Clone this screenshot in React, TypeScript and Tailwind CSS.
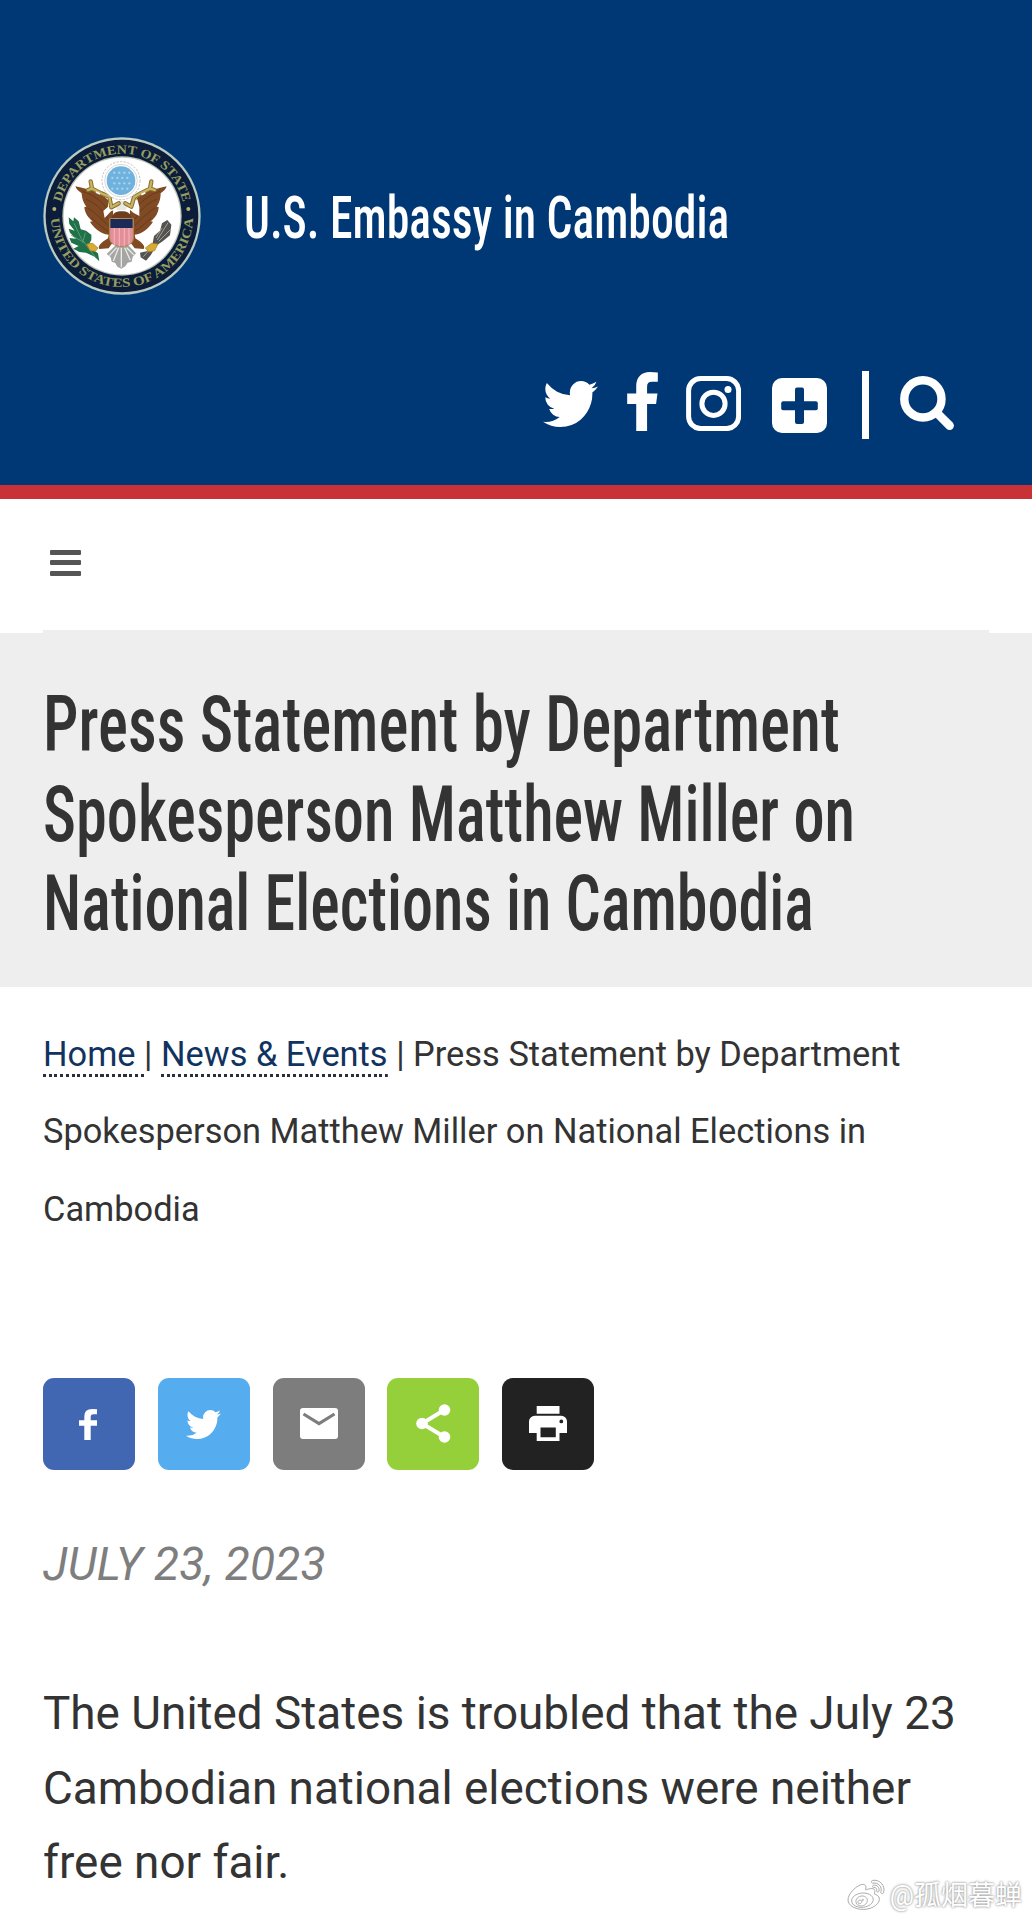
import type { ReactNode } from 'react';
import { FaWeibo } from 'react-icons/fa';

const TWITTER =
  'M1684 408q-67 98-162 167 1 14 1 42 0 130-38 259.5t-115.5 248.5-184.5 210.5-258 146-323 54.5q-271 0-496-145 35 4 78 4 225 0 401-138-105-2-188-64.5t-114-159.5q33 5 61 5 43 0 85-11-112-23-185.5-111.5t-73.5-205.5v-4q68 38 146 41-66-44-105-115t-39-154q0-88 44-163 121 149 294.5 238.5t371.5 99.5q-8-38-8-74 0-134 94.5-228.5t228.5-94.5q140 0 236 102 109-21 205-78-37 115-142 178 93-10 186-50z';

const FACEBOOK =
  'M1343 12v264h-157q-86 0-116 36t-30 108v189h293l-39 296h-254v759h-306v-759h-255v-296h255v-218q0-186 104-288.5t277-102.5q147 0 228 12z';

function TwitterIcon({ className }: { className: string }) {
  return (
    <svg viewBox="108 256 1576 1280" preserveAspectRatio="none" fill="currentColor" className={className}>
      <path d={TWITTER} />
    </svg>
  );
}

function Seal() {
  return (
    <svg viewBox="38 50 480 480" className="h-40 w-40 shrink-0">
      <defs>
        <path id="arc-top" d="M 91 290 A 187 187 0 0 1 465 290" />
        <path id="arc-bottom" d="M 65 290 A 213 213 0 0 0 491 290" />
      </defs>
      <circle cx="278" cy="290" r="236" fill="#b9cbc0" />
      <circle cx="278" cy="290" r="229" fill="#0b1d3a" />
      <circle cx="278" cy="290" r="179" fill="#b9c2b4" />
      <circle cx="278" cy="290" r="175" fill="#fff" />
      <g fill="#979e62" fontSize="38" className="font-['Liberation_Serif',serif] font-bold">
        <text textAnchor="middle">
          <textPath href="#arc-top" startOffset="50%" textLength="505" lengthAdjust="spacingAndGlyphs">
            DEPARTMENT OF STATE
          </textPath>
        </text>
        <text textAnchor="middle">
          <textPath href="#arc-bottom" startOffset="50%" textLength="655" lengthAdjust="spacingAndGlyphs">
            UNITED STATES OF AMERICA
          </textPath>
        </text>
      </g>
      <circle cx="75" cy="269" r="6" fill="#b4b36c" />
      <circle cx="477" cy="269" r="6" fill="#b4b36c" />

      {/* tail */}
      <path d="M262 375 L232 404 L244 414 L247 427 L258 431 L264 442 L276 448 L288 441 L295 430 L307 427 L310 413 L320 402 L294 375Z" fill="#a5a5a3" />
      <path d="M268 385 L252 425 M276 385 V444 M286 385 L303 423 M262 385 L240 409 M292 385 L314 407" stroke="#e9e9e7" strokeWidth="4" fill="none" />

      {/* wings and body */}
      <path d="M138 201 C160 206 186 211 204 219 C228 232 246 248 251 268 L253 365 L238 387 L210 389 C203 381 218 368 236 357 L238 346 C214 344 190 322 182 307 L190 306 C176 295 166 280 165 263 L171 262 C160 248 158 234 157 222 C147 215 141 209 138 201Z" fill="#7f4a24" />
      <path d="M412 201 C392 206 366 211 348 219 C326 232 308 248 302 268 L300 365 L316 387 L343 389 C350 381 336 368 318 357 L316 346 C340 344 362 322 371 307 L364 306 C378 295 388 280 388 263 L382 262 C392 248 394 234 394 222 C404 215 409 209 412 201Z" fill="#7f4a24" />
      <path d="M160 216 C190 225 220 245 238 276 M170 240 C196 250 220 270 236 300 M175 266 C196 278 216 300 236 318 M186 296 C204 310 220 326 236 336 M392 216 C362 225 334 245 315 276 M382 240 C356 250 334 270 317 300 M377 266 C356 278 336 300 317 318 M366 296 C348 310 334 326 317 336" stroke="#6a3b1a" strokeWidth="3" fill="none" />
      <path d="M248 296 C250 280 262 276 277 276 C293 276 304 280 307 298Z" fill="#6e3d1c" />
      <path d="M236 240 L262 246 L250 258 L262 268 L245 276 L226 296 L222 275 L236 262Z M324 240 L296 246 L308 258 L298 268 L312 280 L330 290 L330 262Z" fill="#fff" />
      <path d="M256 250 C268 242 288 242 296 252 L290 272 L262 272Z" fill="#e8e8e2" />

      {/* scrolls */}
      <g fill="none" strokeLinecap="round" strokeLinejoin="round">
        <path d="M184 186 L188 208 L176 212 M188 208 L216 222 L240 232 L246 264 L268 252 M366 186 L362 208 L376 212 M362 208 L334 222 L314 234 L306 262 L288 252" stroke="#85702b" strokeWidth="13" />
        <path d="M184 186 L188 208 L176 212 M188 208 L216 222 L240 232 L246 264 L268 252 M366 186 L362 208 L376 212 M362 208 L334 222 L314 234 L306 262 L288 252" stroke="#c9b262" strokeWidth="7" />
      </g>
      <path d="M200 218 L212 224 M348 220 L336 226" stroke="#fff" strokeWidth="5" />

      {/* glory */}
      <circle cx="275" cy="184" r="57" fill="#fff" stroke="#c3c3c3" strokeWidth="3" strokeDasharray="7 4" />
      <circle cx="275" cy="184" r="49" fill="none" stroke="#d9d9d9" strokeWidth="3" />
      <circle cx="275" cy="184" r="43" fill="#6fb2dd" />
      <g fill="#a9d3ec">
        {[160, 176, 192, 208].map((y, row) =>
          [252, 267, 282, 297].map((x) => <circle key={`${x}-${y}`} cx={x + (row % 2 ? -3 : 3)} cy={y} r="3.5" />),
        )}
      </g>

      {/* shield */}
      <path d="M241 298 H312 V356 C312 374 296 379 277 382 C258 379 241 374 241 356Z" fill="#e58d98" stroke="#a98a4b" strokeWidth="3" />
      <path d="M255 326 V377 M270 326 V381 M285 326 V381 M299 326 V376" stroke="#edb0b4" strokeWidth="4" />
      <path d="M243 299 H310 V326 H243Z" fill="#1b2a57" />

      {/* olive branch */}
      <path d="M118 294 L132 306 L134 294 L148 306 L154 330 L170 334 L186 346 L186 362 L178 376 L186 388 L206 402 L210 426 L196 412 L170 400 L150 398 L132 388 L148 380 L126 370 L120 356 L140 358 L122 340 L118 328 L136 334 L120 314Z" fill="#1f7148" />
      <path d="M134 312 L156 358 L200 416 M126 348 L166 370 M168 340 L160 370" stroke="#5d9879" strokeWidth="3" fill="none" />

      {/* arrows */}
      <path d="M414 302 L426 316 L422 348 L400 366 L382 378 L364 408 L350 424 L334 414 L332 400 L352 396 L370 372 L374 350 L392 334 L398 312Z" fill="#55534f" />
      <path d="M416 310 L384 362 M424 330 L388 366 M398 326 L380 356 M360 392 L342 412" stroke="#a4a29c" strokeWidth="3" />
      <path d="M172 374 L190 372 L206 386 L198 396 L182 394Z M386 374 L366 372 L348 386 L358 398 L376 394Z" fill="#d9ab35" stroke="#a37e20" strokeWidth="2" />
    </svg>
  );
}

function ShareButton({ color, children }: { color: string; children: ReactNode }) {
  return (
    <button className={`flex h-[92px] w-[92px] items-center justify-center rounded-[11px] text-white ${color}`}>
      {children}
    </button>
  );
}

function CrumbLink({ children }: { children: ReactNode }) {
  return (
    <a className="whitespace-pre bg-[repeating-linear-gradient(90deg,#26303f_0_3px,transparent_3px_5.75px)] bg-[length:100%_3px] bg-bottom bg-no-repeat pb-[3px] text-[#10335f]">
      {children}
    </a>
  );
}

export default function App() {
  return (
    <div className="relative h-[1920px] w-[1032px] overflow-hidden bg-white font-['Roboto',sans-serif] text-[#333]">
      <header className="h-[499px] border-b-[14px] border-[#c83236] bg-[#003875] text-white">
        <div className="flex items-center pt-[136px] pl-[42px]">
          <Seal />
          <span className="mt-[4px] ml-[42px] block origin-left scale-x-[0.774] text-[59px] leading-[70px] font-medium whitespace-nowrap [font-stretch:75%]">
            U.S. Embassy in Cambodia
          </span>
        </div>

        <div className="mt-[75px] flex items-start pl-[543px]">
          <TwitterIcon className="mt-[10px] h-[46px] w-[55px]" />
          <svg viewBox="479 0 864 1664" fill="currentColor" className="mt-px ml-[29px] h-[59px] w-[31px]">
            <path d={FACEBOOK} />
          </svg>
          <svg viewBox="0 0 55 55" className="mt-[5px] ml-[28px] h-[55px] w-[55px]">
            <rect x="2.6" y="2.6" width="50" height="50" rx="12" fill="none" stroke="currentColor" strokeWidth="5" />
            <circle cx="27.5" cy="27.8" r="11.6" fill="none" stroke="currentColor" strokeWidth="5" />
            <circle cx="42" cy="13.4" r="3.5" fill="currentColor" />
          </svg>
          <svg viewBox="0 0 55 55" className="mt-[7px] ml-[31px] h-[55px] w-[55px]">
            <rect width="55" height="55" rx="10" fill="currentColor" />
            <rect x="23" y="9.5" width="9" height="36.5" rx="2" fill="#003875" />
            <rect x="9.2" y="23.2" width="36.6" height="9" rx="2" fill="#003875" />
          </svg>
          <div className="ml-[35px] h-[68px] w-[6.5px] bg-white" />
          <svg viewBox="0 0 55 55" className="mt-[5px] ml-[31px] h-[55px] w-[55px]" fill="none" stroke="currentColor">
            <circle cx="22.9" cy="22.9" r="18.6" strokeWidth="8.4" />
            <path d="M37 37L49.6 49.6" strokeWidth="8.6" strokeLinecap="round" />
          </svg>
        </div>
      </header>

      <nav className="flex h-[134px] flex-col justify-between px-[43px]">
        <button className="mt-[50.5px] ml-[7px] flex w-[31px] flex-col gap-[5.5px]">
          <span className="h-[5px] rounded-[1px] bg-[#555]" />
          <span className="h-[5px] rounded-[1px] bg-[#555]" />
          <span className="h-[5px] rounded-[1px] bg-[#555]" />
        </button>
        <div className="h-[3px] bg-[#eee]" />
      </nav>

      <section className="h-[354px] bg-[#eee] pt-[47px] pl-[43px]">
        <h1 className="text-[78px] leading-[89.5px] font-medium whitespace-nowrap [font-stretch:75%]">
          <span className="block origin-left scale-x-[0.809]">Press Statement by Department</span>
          <span className="block origin-left scale-x-[0.799]">Spokesperson Matthew Miller on</span>
          <span className="block origin-left scale-x-[0.796]">National Elections in Cambodia</span>
        </h1>
      </section>

      <main className="px-[43px] pt-[29px]">
        <p className="text-[34.4px] leading-[77.4px] whitespace-nowrap">
          <CrumbLink>{'Home '}</CrumbLink>| <CrumbLink>{'News & Events'}</CrumbLink> | Press Statement by Department
          <br />
          Spokesperson Matthew Miller on National Elections in
          <br />
          Cambodia
        </p>

        <div className="mt-[130px] flex gap-[22.75px]">
          <ShareButton color="bg-[#4167b2]">
            <svg viewBox="479 0 864 1664" preserveAspectRatio="none" fill="currentColor" className="mr-[2px] h-[31px] w-[18px]">
              <path d="M1343 12v274h-157q-146 0-146 134v189h303v286h-303v769h-306v-769h-255v-286h255v-218q0-391 381-391q147 0 228 12z" />
            </svg>
          </ShareButton>
          <ShareButton color="bg-[#55acee]">
            <TwitterIcon className="mr-[1px] h-[29px] w-[35px]" />
          </ShareButton>
          <ShareButton color="bg-[#7d7d7d]">
            <svg viewBox="0 0 38 31" className="mb-px h-[31px] w-[38px]">
              <rect width="38" height="31" rx="3" fill="currentColor" />
              <path d="M3.5 6L19 15.6L34.5 6" fill="none" stroke="#7d7d7d" strokeWidth="3.2" />
            </svg>
          </ShareButton>
          <ShareButton color="bg-[#95d03a]">
            <svg viewBox="0 0 35 39" className="mb-px h-[39px] w-[35px]">
              <path d="M28.5 6L6 19.5L28.5 33" fill="none" stroke="currentColor" strokeWidth="4" />
              <circle cx="28.5" cy="6" r="5.8" fill="currentColor" />
              <circle cx="6" cy="19.5" r="5.8" fill="currentColor" />
              <circle cx="28.5" cy="33" r="5.8" fill="currentColor" />
            </svg>
          </ShareButton>
          <ShareButton color="bg-[#222]">
            <svg viewBox="0 0 38 35" className="mb-px h-[35px] w-[38px]">
              <path
                fill="currentColor"
                fillRule="evenodd"
                d="M7.7 0H30.5V7.8H7.7ZM5.8 9.7H32.3A5.8 5.8 0 0 1 38 15.5V27H30.5V35H7.7V27H0V15.5A5.8 5.8 0 0 1 5.8 9.7ZM11.5 21.5V31.2H26.8V21.5ZM32.3 13.5A1.9 1.9 0 1 0 32.3 17.3A1.9 1.9 0 1 0 32.3 13.5Z"
              />
            </svg>
          </ShareButton>
        </div>

        <p className="mt-[64px] text-[46px] leading-[60px] tracking-[0.15px] text-[#7e7e7e] italic">JULY 23, 2023</p>

        <p className="mt-[82px] text-[45.87px] leading-[74.3px] whitespace-nowrap">
          The United States is troubled that the July 23
          <br />
          Cambodian national elections were neither
          <br />
          free nor fair.
        </p>
      </main>

      <div className="absolute right-[10px] bottom-[6px] flex items-center gap-[6px] text-white">
        <FaWeibo className="h-[36px] w-[36px] overflow-visible stroke-[#aaa] [stroke-width:14px]" />
        <span className="font-['Roboto','Noto_Sans_CJK_SC',sans-serif] text-[27px] leading-[36px] [text-shadow:0_0_2px_#999,0_0_3px_#aaa]">
          @孤烟暮蝉
        </span>
      </div>
    </div>
  );
}
